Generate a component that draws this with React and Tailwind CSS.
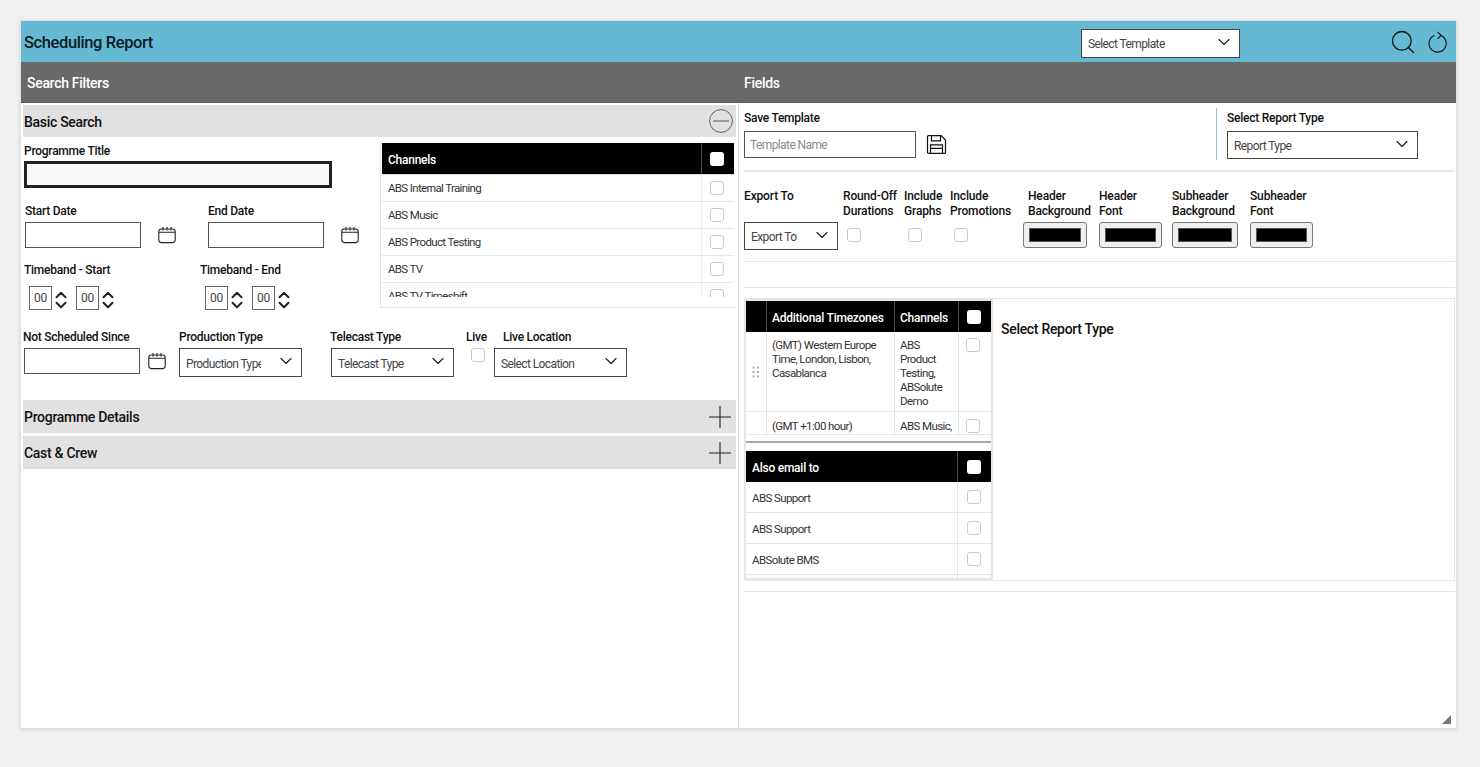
import { ChevronDown, ChevronUp, Search } from 'lucide-react';

const channels = ['ABS Internal Training', 'ABS Music', 'ABS Product Testing', 'ABS TV', 'ABS TV Timeshift'];
const emails = ['ABS Support', 'ABS Support', 'ABSolute BMS', ''];

const Label = ({ children, tight = false, className = '' }) => (
  <div className={`h-4 whitespace-nowrap text-[12px] font-medium tracking-[-0.25px] text-[#111] ${tight ? 'leading-4' : 'leading-[18px]'} ${className}`}>{children}</div>
);

const Check = ({ className = '' }) => (
  <input
    type="checkbox"
    readOnly
    className={`block h-[14px] w-[14px] appearance-none rounded-[3px] border border-[#cacaca] bg-white ${className}`}
  />
);

const HeadCheck = () => <input type="checkbox" readOnly className="block h-[14px] w-[14px] appearance-none rounded-[3px] bg-white" />;

const CalendarIcon = ({ className = '' }) => (
  <svg width="18" height="18" viewBox="0 0 18 18" fill="none" stroke="#222" strokeWidth="1.1" className={className}>
    <rect x="0.8" y="3" width="16.4" height="13.6" rx="2.5" />
    <path d="M1 6.2h16M5 1v3.6M9 1v3.6M13 1v3.6" />
  </svg>
);

const PlusIcon = () => (
  <svg width="22" height="22" viewBox="0 0 22 22" fill="none" stroke="#222" strokeWidth="1.1" className="mr-[1px]">
    <path d="M11 0v22M0 11h22" />
  </svg>
);

const SelectBox = ({ label, className = '', textClass = '' }) => (
  <div className={`flex items-center justify-between border border-[#444] bg-white pl-[6px] pr-[5px] ${className}`}>
    <span className={`overflow-hidden whitespace-nowrap pr-[1px] pt-[2px] text-[12px] font-normal tracking-[-0.6px] text-[#444] ${textClass}`}>{label}</span>
    <ChevronDown size={20} strokeWidth={1.4} className="mb-[3px] shrink-0 text-[#222]" />
  </div>
);

const TextBox = ({ className = '' }) => <input type="text" className={`block border border-[#555] bg-white ${className}`} />;

const Stepper = () => (
  <div className="mt-[4px] flex h-[20px] flex-col items-center justify-center">
    <ChevronUp size={18} strokeWidth={2.6} className="-my-[4px] shrink-0 text-[#222]" />
    <ChevronDown size={18} strokeWidth={2.6} className="-my-[4px] shrink-0 text-[#222]" />
  </div>
);

const TimeBox = () => (
  <div className="flex h-[24px] w-[23px] items-center justify-center border border-[#666] text-[12px] tracking-[-0.2px] text-[#444]">00</div>
);

const TimeBand = () => (
  <div className="flex items-center">
    <TimeBox />
    <div className="ml-[3px] flex w-[12px] justify-center"><Stepper /></div>
    <div className="ml-[9px]"><TimeBox /></div>
    <div className="ml-[3px] flex w-[12px] justify-center"><Stepper /></div>
  </div>
);

const Bar = ({ title, children, className = '' }) => (
  <div className={`flex items-center justify-between bg-[#e1e1e1] pl-[1px] pr-[4px] ${className}`}>
    <span className="pt-[2px] text-[14px] font-medium tracking-[-0.3px] text-[#111]">{title}</span>
    {children}
  </div>
);

const ColorBox = ({ className = '' }) => (
  <div className={`h-[26px] rounded-[3px] border border-[#777] bg-[#efefef] px-[5px] py-[5px] ${className}`}>
    <div className="h-full border border-[#555] bg-black" />
  </div>
);

const Hr = ({ className = '' }) => <div className={`h-[1px] w-[711px] bg-[#e6e6e6] ${className}`} />;

export default function App() {
  return (
    <div className="min-h-screen bg-[#f1eff0] pl-[20px] pt-[20px] font-['Roboto',sans-serif]">
      <div className="h-[709px] w-[1437px] border border-[#e2e2e2] bg-white shadow-[0_1px_3px_rgba(0,0,0,0.12)]">
        {/* title bar */}
        <div className="flex h-[41px] items-center bg-[#65b9d2] pl-[3px]">
          <h1 className="w-[1057px] pt-[3px] text-[16.5px] font-medium tracking-[-0.4px] text-[#0c1c22]">Scheduling Report</h1>
          <SelectBox label="Select Template" className="mt-[3px] h-[29px] w-[159px] border-[#333]" textClass="text-[#333]" />
          <Search size={28} strokeWidth={1.1} className="ml-[149px] mt-[1px] text-[#111]" />
          <svg width="22" height="22" viewBox="0 0 22 22" fill="none" stroke="#111" strokeWidth="1.1" className="ml-[10px]">
            <path d="M14 4.6a8.6 8.6 0 1 1-6.5-.1" />
            <path d="M10.5 0.8l3.7 3.7-3.6 3.4" />
          </svg>
        </div>

        <div className="flex h-[41px] items-center border-b border-[#5a5a5a] bg-[#696969] pt-[2px] text-[14px] font-medium tracking-[-0.3px] text-white">
          <div className="w-[723px] pl-[6px]">Search Filters</div>
          <div>Fields</div>
        </div>

        <div className="flex h-[626px]">
          {/* search filters */}
          <div className="w-[718px] border-r border-[#dedede] px-[2px] pt-[2px]">
            <Bar title="Basic Search" className="h-[32px]">
              <svg width="24" height="24" viewBox="0 0 24 24" fill="none" stroke="#555" strokeWidth="0.9" className="mr-[-1px]">
                <circle cx="12" cy="12" r="11.4" />
                <path d="M4 12h16" strokeWidth="1.3" stroke="#777" />
              </svg>
            </Bar>

            <div className="flex">
              <div className="w-[357px] pt-[6px]">
                <Label tight className="ml-[1px]">Programme Title</Label>
                <input type="text" className="ml-[1px] mt-[2px] block h-[27px] w-[308px] border-[3px] border-[#222] bg-[#fafafa]" />
                <div className="ml-[2px] mt-[15px] flex">
                  <div className="w-[183px]">
                    <Label tight>Start Date</Label>
                    <div className="mt-[3px] flex items-center">
                      <TextBox className="h-[26px] w-[116px]" />
                      <CalendarIcon className="ml-[17px]" />
                    </div>
                  </div>
                  <div>
                    <Label tight>End Date</Label>
                    <div className="mt-[3px] flex items-center">
                      <TextBox className="h-[26px] w-[116px]" />
                      <CalendarIcon className="ml-[17px]" />
                    </div>
                  </div>
                </div>
                <div className="ml-[1px] mt-[14px] flex">
                  <div className="w-[176px]">
                    <Label tight>Timeband - Start</Label>
                    <div className="ml-[5px] mt-[8px]"><TimeBand /></div>
                  </div>
                  <div>
                    <Label tight>Timeband - End</Label>
                    <div className="ml-[5px] mt-[8px]"><TimeBand /></div>
                  </div>
                </div>
              </div>

              <div className="mt-[6px] h-[165px] w-[356px] border-b border-l border-[#e4e4e4] pl-[1px]">
                <div className="h-[154px] w-[352px] overflow-hidden">
                  <div className="flex h-[32px] items-center border-b border-[#dcdcdc] bg-black text-[12px] font-medium tracking-[-0.25px] text-white">
                    <div className="w-[319px] pl-[6px] pt-[2px]">Channels</div>
                    <div className="flex h-full flex-1 items-center justify-center border-l border-[#444] pr-[3px]"><HeadCheck /></div>
                  </div>
                  {channels.map((c) => (
                    <div key={c} className="flex h-[27px] items-center border-b border-[#e8e8e8] text-[11.5px] tracking-[-0.65px] text-[#333]">
                      <div className="w-[319px] pl-[6px] pt-[1px]">{c}</div>
                      <div className="flex h-full flex-1 items-center justify-center border-l border-[#eaeaea] pr-[3px]"><Check /></div>
                    </div>
                  ))}
                </div>
              </div>
            </div>

            <div className="mt-[19px] flex">
              <div className="w-[156px]">
                <Label tight>Not Scheduled Since</Label>
                <div className="mt-[3px] flex items-center">
                  <TextBox className="ml-[1px] h-[26px] w-[116px]" />
                  <CalendarIcon className="ml-[8px]" />
                </div>
              </div>
              <div className="w-[151px]">
                <Label tight>Production Type</Label>
                <SelectBox label="Production Type" className="mt-[3px] h-[29px] w-[123px]" textClass="w-[75px]" />
              </div>
              <div className="w-[136px]">
                <Label tight>Telecast Type</Label>
                <SelectBox label="Telecast Type" className="ml-[1px] mt-[3px] h-[29px] w-[123px]" />
              </div>
              <div className="w-[28px]">
                <Label tight>Live</Label>
                <Check className="ml-[5px] mt-[3px]" />
              </div>
              <div>
                <Label tight className="ml-[9px]">Live Location</Label>
                <SelectBox label="Select Location" className="mt-[3px] h-[29px] w-[133px]" />
              </div>
            </div>

            <Bar title="Programme Details" className="mt-[23px] h-[33px]"><PlusIcon /></Bar>
            <Bar title="Cast & Crew" className="mt-[3px] h-[33px]"><PlusIcon /></Bar>
          </div>

          {/* fields */}
          <div className="relative flex-1 pl-[5px] pt-[5px]">
            <div className="flex h-[52px]">
              <div className="w-[472px] pt-[2px]">
                <Label tight>Save Template</Label>
                <div className="mt-[5px] flex items-center">
                  <input
                    type="text"
                    placeholder="Template Name"
                    className="block h-[27px] w-[172px] border border-[#555] bg-white pl-[5px] text-[12px] tracking-[-0.6px] placeholder:text-[#8a8a8a]"
                  />
                  <svg width="21" height="21" viewBox="0 0 21 21" fill="none" stroke="#111" strokeWidth="1.2" className="ml-[10px]">
                    <path d="M1.5 2.6a1 1 0 0 1 1-1h12.6l4.4 4.4v12.4a1 1 0 0 1-1 1H2.5a1 1 0 0 1-1-1z" />
                    <path d="M5.5 1.6v5.2h9V1.6M4.5 19.4v-8.6h12v8.6M4.5 14.4h12" />
                  </svg>
                </div>
              </div>
              <div className="border-l border-[#8cc5cf] pl-[10px] pt-[2px]">
                <Label tight>Select Report Type</Label>
                <SelectBox label="Report Type" className="mt-[5px] h-[28px] w-[191px]" />
              </div>
            </div>

            <Hr className="mt-[10px] h-[2px]" />

            <div className="mt-[17px] flex text-[12px] font-medium leading-[15px] tracking-[-0.15px] text-[#111]">
              <div className="w-[99px]">
                <div className="h-[30px]">Export To</div>
                <SelectBox label="Export To" className="mt-[3px] h-[28px] w-[94px]" />
              </div>
              <div className="w-[61px]">
                <div className="h-[30px] whitespace-nowrap">Round-Off<br />Durations</div>
                <Check className="ml-[4px] mt-[9px]" />
              </div>
              <div className="w-[46px]">
                <div className="h-[30px]">Include<br />Graphs</div>
                <Check className="ml-[4px] mt-[9px]" />
              </div>
              <div className="w-[73px]">
                <div className="h-[30px]">Include<br />Promotions</div>
                <Check className="ml-[4px] mt-[9px]" />
              </div>
              <div className="w-[76px]">
                <div className="h-[30px] pl-[5px]">Header<br />Background</div>
                <ColorBox className="mt-[3px] w-[64px]" />
              </div>
              <div className="w-[73px]">
                <div className="h-[30px]">Header<br />Font</div>
                <ColorBox className="mt-[3px] w-[63px]" />
              </div>
              <div className="w-[78px]">
                <div className="h-[30px]">Subheader<br />Background</div>
                <ColorBox className="mt-[3px] w-[66px]" />
              </div>
              <div>
                <div className="h-[30px]">Subheader<br />Font</div>
                <ColorBox className="mt-[3px] w-[63px]" />
              </div>
            </div>

            <Hr className="mt-[11px]" />
            <Hr className="mt-[25px]" />

            <div className="mt-[10px] flex h-[283px] w-[711px] border border-l-0 border-[#e6e6e6]">
              <div className="h-full w-[249px] overflow-hidden border-2 border-[#e3e6ea] text-[11.5px] leading-[14px] tracking-[-0.6px] text-[#333]">
                <div className="flex h-[31px] items-center bg-black text-[12px] font-medium tracking-[-0.25px] text-white">
                  <div className="h-full w-[21px] border-r border-[#444]" />
                  <div className="flex h-full w-[128px] items-center border-r border-[#444] pl-[5px] pt-[2px]">Additional Timezones</div>
                  <div className="flex h-full w-[64px] items-center border-r border-[#444] pl-[5px] pt-[2px]">Channels</div>
                  <div className="flex h-full flex-1 items-center justify-center pr-[2px]"><HeadCheck /></div>
                </div>
                <div className="flex h-[80px] border-b border-[#e3e6ea]">
                  <div className="flex w-[21px] items-center justify-center border-r border-[#e3e6ea]">
                    <svg width="8" height="12" viewBox="0 0 8 12" fill="#aaa">
                      <rect x="0.5" y="0.5" width="2" height="2" />
                      <rect x="5" y="0.5" width="2" height="2" />
                      <rect x="0.5" y="5" width="2" height="2" />
                      <rect x="5" y="5" width="2" height="2" />
                      <rect x="0.5" y="9.5" width="2" height="2" />
                      <rect x="5" y="9.5" width="2" height="2" />
                    </svg>
                  </div>
                  <div className="w-[128px] border-r border-[#e3e6ea] pl-[5px] pt-[6px]">(GMT) Western Europe<br />Time, London, Lisbon,<br />Casablanca</div>
                  <div className="w-[64px] border-r border-[#e3e6ea] pl-[5px] pt-[6px]">ABS<br />Product<br />Testing,<br />ABSolute<br />Demo</div>
                  <div className="flex-1 pl-[7px] pt-[6px]"><Check /></div>
                </div>
                <div className="flex h-[23px] items-center border-b border-[#e3e6ea]">
                  <div className="h-full w-[21px] border-r border-[#e3e6ea]" />
                  <div className="flex h-full w-[128px] items-center border-r border-[#e3e6ea] pl-[5px] pt-[5px]">(GMT +1:00 hour)</div>
                  <div className="flex h-full w-[64px] items-center border-r border-[#e3e6ea] pl-[5px] pt-[5px]">ABS Music,</div>
                  <div className="flex-1 pl-[7px] pt-[5px]"><Check /></div>
                </div>
                <div className="mt-[6px] h-[2px] bg-[#a9a9a9]" />
                <div className="mt-[8px] flex h-[31px] items-center bg-black text-[12px] font-medium tracking-[-0.25px] text-white">
                  <div className="w-[212px] border-r border-[#444] pl-[6px] pt-[3px] leading-[28px]">Also email to</div>
                  <div className="flex flex-1 items-center justify-center pr-[1px]"><HeadCheck /></div>
                </div>
                {emails.map((m, i) => (
                  <div key={i} className="flex h-[31px] border-b border-[#e3e6ea]">
                    <div className="flex w-[212px] items-center border-r border-[#e3e6ea] pl-[6px] pt-[1px]">{m}</div>
                    <div className="flex flex-1 items-center justify-center pr-[1px]">{m && <Check />}</div>
                  </div>
                ))}
              </div>
              <div className="pl-[8px] pt-[20px] text-[14px] font-medium tracking-[-0.3px] text-[#111]">Select Report Type</div>
            </div>

            <Hr className="mt-[10px]" />

            <svg width="9" height="9" viewBox="0 0 9 9" fill="#777" className="absolute bottom-[5px] right-[5px]">
              <path d="M9 0v9H0z" />
            </svg>
          </div>
        </div>
      </div>
    </div>
  );
}
